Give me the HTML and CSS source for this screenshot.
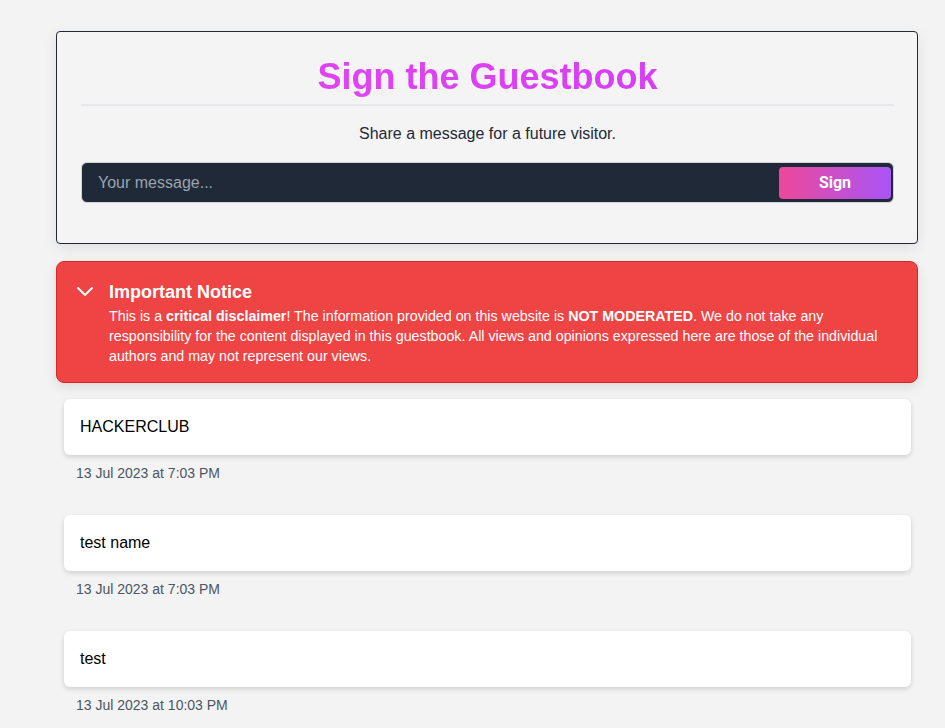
FILE: index.html
```html
<!DOCTYPE html>
<html lang="en">
<head>
<meta charset="utf-8">
<title>Guestbook</title>
<link rel="stylesheet" href="styles.css">
</head>
<body>
<main class="page">
  <section class="sign-card">
    <h1 class="title">Sign the Guestbook</h1>
    <hr class="rule">
    <p class="subtitle">Share a message for a future visitor.</p>
    <form class="sign-form">
      <input class="msg-input" type="text" placeholder="Your message...">
      <button class="sign-btn" type="button">Sign</button>
    </form>
  </section>

  <section class="notice">
    <svg class="chev" width="24" height="24" viewBox="0 0 24 24" fill="none" stroke="#fff" stroke-width="2" stroke-linecap="round" stroke-linejoin="round"><path d="M5 9l7 7 7-7"/></svg>
    <div class="notice-body">
      <h2 class="notice-title">Important Notice</h2>
      <p class="notice-text">This is a <b>critical disclaimer</b>! The information provided on this website is <b>NOT MODERATED</b>. We do not take any responsibility for the content displayed in this guestbook. All views and opinions expressed here are those of the individual authors and may not represent our views.</p>
    </div>
  </section>

  <ul class="entries">
    <li class="entry">
      <div class="entry-card">HACKERCLUB</div>
      <div class="entry-date">13 Jul 2023 at 7:03 PM</div>
    </li>
    <li class="entry">
      <div class="entry-card">test name</div>
      <div class="entry-date">13 Jul 2023 at 7:03 PM</div>
    </li>
    <li class="entry">
      <div class="entry-card">test</div>
      <div class="entry-date">13 Jul 2023 at 10:03 PM</div>
    </li>
  </ul>
</main>
</body>
</html>
```

FILE: styles.css
```css
* { box-sizing: border-box; }
html, body { margin: 0; padding: 0; }
body {
  background: #f3f3f3;
  font-family: "Liberation Sans", Arial, sans-serif;
  color: #111;
}
.page {
  width: 862px;
  margin-left: 56px;
  padding-top: 31px;
}
.sign-card {
  background: #f4f4f4;
  border: 1px solid #1f2937;
  border-radius: 4px;
  padding: 25px 23px 24px 24px;
  box-shadow: 0 4px 14px rgba(0,0,0,0.08);
}
.title {
  margin: 0;
  font-size: 36px;
  line-height: 40px;
  font-weight: 700;
  text-align: center;
  background: linear-gradient(to right, #e546ee, #d23bf8);
  -webkit-background-clip: text;
  background-clip: text;
  color: transparent;
}
.rule {
  margin: 7px 0 0;
  border: 0;
  height: 2px;
  background: #e5e7eb;
}
.subtitle {
  margin: 16px 0 0;
  font-size: 16px;
  line-height: 24px;
  text-align: center;
  color: #1f2937;
}
.sign-form {
  margin: 16px 0 16px;
  display: flex;
  align-items: center;
  height: 41px;
  background: #1f2937;
  border: 1px solid #d1d5db;
  border-radius: 6px;
  padding: 2px 2px 2px 0;
}
.msg-input {
  flex: 1;
  min-width: 0;
  height: 100%;
  border: 0;
  outline: none;
  background: transparent;
  padding: 0 16px;
  font-family: "Liberation Sans", Arial, sans-serif;
  font-size: 16px;
  color: #fff;
}
.msg-input::placeholder { color: #9ca3af; }
.sign-btn {
  width: 112px;
  height: 32px;
  border: 0;
  border-radius: 4px;
  background: linear-gradient(to right, #ec4899, #a855f7);
  color: #fff;
  font-family: Roboto, "Liberation Sans", sans-serif;
  font-weight: 700;
  font-size: 16px;
}
.notice {
  margin-top: 17px;
  display: flex;
  align-items: flex-start;
  gap: 12px;
  background: #ef4444;
  border: 1px solid #dc2626;
  border-radius: 8px;
  padding: 16px 20px 16px 16px;
  color: #fff;
  box-shadow: 0 4px 12px rgba(0,0,0,0.1);
}
.chev { flex: none; margin-top: 1px; }
.notice-body { flex: 1; }
.notice-title {
  margin: 0;
  font-size: 18px;
  line-height: 28px;
  font-weight: 700;
}
.notice-text {
  margin: 0;
  font-size: 14.25px;
  line-height: 20px;
}
.entries {
  list-style: none;
  margin: 16px 0 0;
  padding: 0 7px 0 8px;
}
.entry { margin-bottom: 32px; }
.entry-card {
  background: #fff;
  border-radius: 6px;
  padding: 16px;
  font-size: 16px;
  line-height: 24px;
  color: #000;
  box-shadow: 0 2px 5px rgba(0,0,0,0.15);
}
.entry-date {
  margin-top: 8px;
  padding-left: 12px;
  font-size: 14px;
  line-height: 20px;
  color: #4b5563;
}
```
